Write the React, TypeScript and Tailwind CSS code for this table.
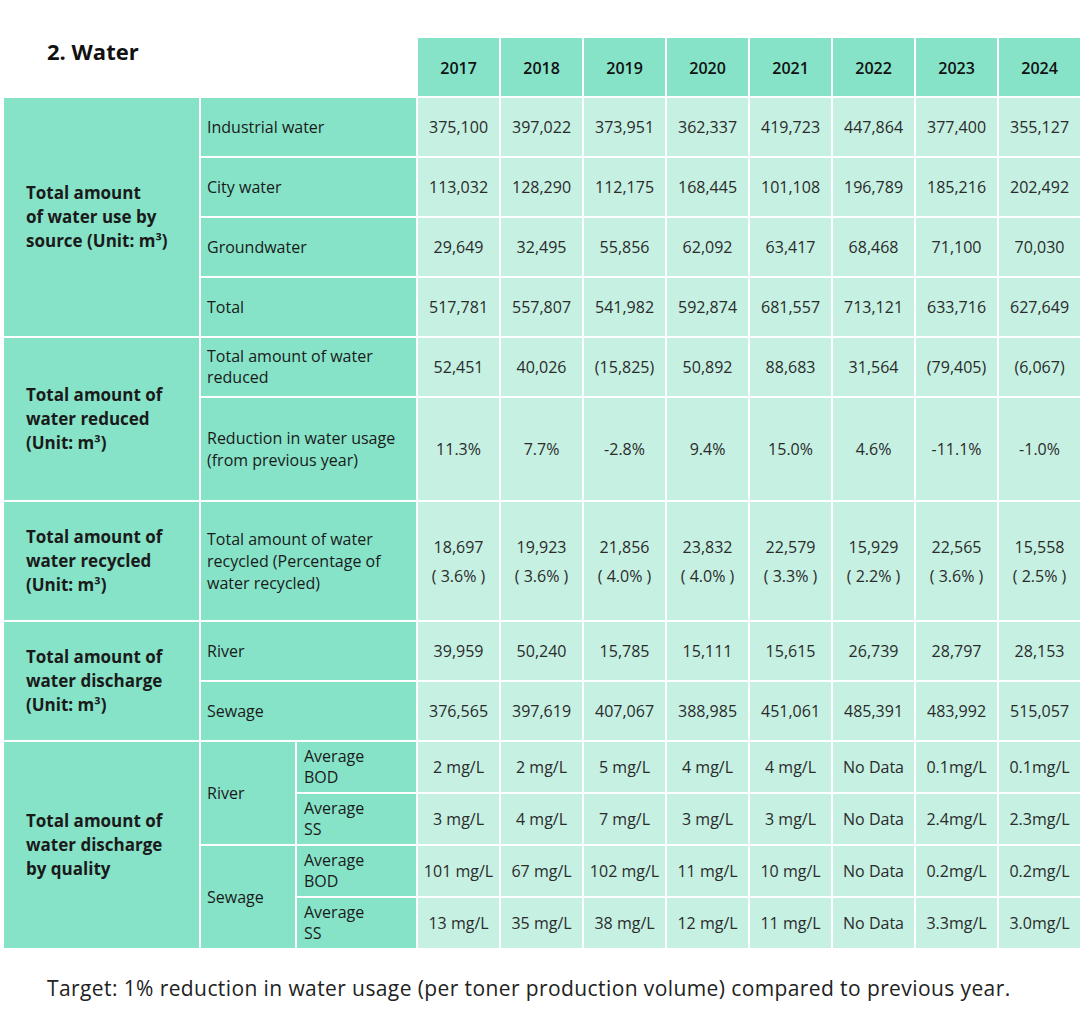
import React from "react";

const years = ["2017", "2018", "2019", "2020", "2021", "2022", "2023", "2024"];

const lbl = "bg-[#86e3c8] border-2 border-white text-[#1a1a1a] align-middle";
const dat = "bg-[#c5f0e2] border-2 border-white text-center text-[#2b2b2b] align-middle";

function Data({ vals }: { vals: React.ReactNode[] }) {
  return (
    <>
      {vals.map((v, i) => (
        <td key={i} className={dat}>
          {v}
        </td>
      ))}
    </>
  );
}

function Head({ children }: { children: React.ReactNode }) {
  return <td className={lbl + " pl-[22px] text-[17px] font-bold leading-[24px]"}>{children}</td>;
}

function Recycled({ a, b }: { a: string; b: string }) {
  return (
    <div className="flex flex-col gap-[7px] leading-[22px]">
      <span>{a}</span>
      <span>{b}</span>
    </div>
  );
}

export default function App() {
  return (
    <div className="bg-white w-[1080px] h-[1032px] pt-[36px] font-['Open_Sans',sans-serif] text-[16px]">
      <table className="border-collapse table-fixed ml-[2px] w-[1079px]">
        <colgroup>
          <col className="w-[197px]" />
          <col className="w-[96px]" />
          <col className="w-[121px]" />
          {years.map((y) => (
            <col key={y} className="w-[83px]" />
          ))}
        </colgroup>
        <tbody>
          <tr className="h-[60px]">
            <td colSpan={3} className="bg-white border-2 border-white align-top pl-[43px] pt-0">
              <span className="block text-[22px] leading-[26px] font-bold text-[#111]">2. Water</span>
            </td>
            {years.map((y) => (
              <td key={y} className={lbl + " text-center text-[16px] font-semibold text-[#111] pt-[2px]"}>
                {y}
              </td>
            ))}
          </tr>

          <tr className="h-[60px]">
            <td rowSpan={4} className={lbl + " pl-[22px] text-[17px] font-bold leading-[24px]"}>
              Total amount
              <br />
              of water use by
              <br />
              source (Unit: m³)
            </td>
            <td colSpan={2} className={lbl + " pl-[6px]"}>Industrial water</td>
            <Data vals={["375,100", "397,022", "373,951", "362,337", "419,723", "447,864", "377,400", "355,127"]} />
          </tr>
          <tr className="h-[60px]">
            <td colSpan={2} className={lbl + " pl-[6px]"}>City water</td>
            <Data vals={["113,032", "128,290", "112,175", "168,445", "101,108", "196,789", "185,216", "202,492"]} />
          </tr>
          <tr className="h-[60px]">
            <td colSpan={2} className={lbl + " pl-[6px]"}>Groundwater</td>
            <Data vals={["29,649", "32,495", "55,856", "62,092", "63,417", "68,468", "71,100", "70,030"]} />
          </tr>
          <tr className="h-[60px]">
            <td colSpan={2} className={lbl + " pl-[6px]"}>Total</td>
            <Data vals={["517,781", "557,807", "541,982", "592,874", "681,557", "713,121", "633,716", "627,649"]} />
          </tr>

          <tr className="h-[60px]">
            <td rowSpan={2} className={lbl + " pl-[22px] text-[17px] font-bold leading-[24px]"}>
              Total amount of
              <br />
              water reduced
              <br />
              (Unit: m³)
            </td>
            <td colSpan={2} className={lbl + " pl-[6px] leading-[21px]"}>
              Total amount of water
              <br />
              reduced
            </td>
            <Data vals={["52,451", "40,026", "(15,825)", "50,892", "88,683", "31,564", "(79,405)", "(6,067)"]} />
          </tr>
          <tr className="h-[104px]">
            <td colSpan={2} className={lbl + " pl-[6px] leading-[22px]"}>
              Reduction in water usage
              <br />
              (from previous year)
            </td>
            <Data vals={["11.3%", "7.7%", "-2.8%", "9.4%", "15.0%", "4.6%", "-11.1%", "-1.0%"]} />
          </tr>

          <tr className="h-[120px]">
            <Head>
              Total amount of
              <br />
              water recycled
              <br />
              (Unit: m³)
            </Head>
            <td colSpan={2} className={lbl + " pl-[6px] leading-[22px]"}>
              Total amount of water
              <br />
              recycled (Percentage of
              <br />
              water recycled)
            </td>
            <Data
              vals={[
                <Recycled a="18,697" b="( 3.6% )" />,
                <Recycled a="19,923" b="( 3.6% )" />,
                <Recycled a="21,856" b="( 4.0% )" />,
                <Recycled a="23,832" b="( 4.0% )" />,
                <Recycled a="22,579" b="( 3.3% )" />,
                <Recycled a="15,929" b="( 2.2% )" />,
                <Recycled a="22,565" b="( 3.6% )" />,
                <Recycled a="15,558" b="( 2.5% )" />,
              ]}
            />
          </tr>

          <tr className="h-[60px]">
            <td rowSpan={2} className={lbl + " pl-[22px] text-[17px] font-bold leading-[24px]"}>
              Total amount of
              <br />
              water discharge
              <br />
              (Unit: m³)
            </td>
            <td colSpan={2} className={lbl + " pl-[6px]"}>River</td>
            <Data vals={["39,959", "50,240", "15,785", "15,111", "15,615", "26,739", "28,797", "28,153"]} />
          </tr>
          <tr className="h-[60px]">
            <td colSpan={2} className={lbl + " pl-[6px]"}>Sewage</td>
            <Data vals={["376,565", "397,619", "407,067", "388,985", "451,061", "485,391", "483,992", "515,057"]} />
          </tr>

          <tr className="h-[52px]">
            <td rowSpan={4} className={lbl + " pl-[22px] text-[17px] font-bold leading-[24px]"}>
              Total amount of
              <br />
              water discharge
              <br />
              by quality
            </td>
            <td rowSpan={2} className={lbl + " pl-[6px]"}>River</td>
            <td className={lbl + " pl-[7px] leading-[21px]"}>
              Average
              <br />
              BOD
            </td>
            <Data vals={["2 mg/L", "2 mg/L", "5 mg/L", "4 mg/L", "4 mg/L", "No Data", "0.1mg/L", "0.1mg/L"]} />
          </tr>
          <tr className="h-[52px]">
            <td className={lbl + " pl-[7px] leading-[21px]"}>
              Average
              <br />
              SS
            </td>
            <Data vals={["3 mg/L", "4 mg/L", "7 mg/L", "3 mg/L", "3 mg/L", "No Data", "2.4mg/L", "2.3mg/L"]} />
          </tr>
          <tr className="h-[52px]">
            <td rowSpan={2} className={lbl + " pl-[6px]"}>Sewage</td>
            <td className={lbl + " pl-[7px] leading-[21px]"}>
              Average
              <br />
              BOD
            </td>
            <Data vals={["101 mg/L", "67 mg/L", "102 mg/L", "11 mg/L", "10 mg/L", "No Data", "0.2mg/L", "0.2mg/L"]} />
          </tr>
          <tr className="h-[52px]">
            <td className={lbl + " pl-[7px] leading-[21px]"}>
              Average
              <br />
              SS
            </td>
            <Data vals={["13 mg/L", "35 mg/L", "38 mg/L", "12 mg/L", "11 mg/L", "No Data", "3.3mg/L", "3.0mg/L"]} />
          </tr>
        </tbody>
      </table>
      <p className="pl-[47px] mt-[23px] text-[21px] tracking-[0.4px] text-[#222]">
        Target: 1% reduction in water usage (per toner production volume) compared to previous year.
      </p>
    </div>
  );
}
